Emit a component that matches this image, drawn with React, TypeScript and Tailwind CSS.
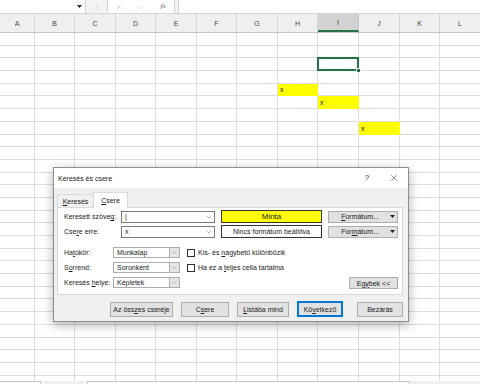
import React from "react";
import { X, Check, ChevronDown } from "lucide-react";

const cols = ["A", "B", "C", "D", "E", "F", "G", "H", "I", "J", "K", "L"];
const gridCols =
  "grid grid-cols-[35px_40px_41px_40px_41px_40px_41px_40px_41px_41px_40px_41px]";

const filled: Record<string, boolean> = { "5-H": true, "6-I": true, "8-J": true };
const rows = Array.from({ length: 28 }, (_, i) => i + 1);

function U({ children }: { children: React.ReactNode }) {
  return <span className="underline underline-offset-[1px]">{children}</span>;
}

function Caret() {
  return (
    <svg width="5" height="3" viewBox="0 0 5 3">
      <path d="M0 0h5L2.5 3z" fill="#222" />
    </svg>
  );
}

function Combo({ value, width }: { value: string; width: string }) {
  return (
    <div className={`${width} h-[12px] flex bg-white border border-[#7a7a7a]`}>
      <div className="flex-1 flex items-center pl-[3px]">{value}</div>
      <div className="w-[11px] flex items-center justify-center">
        <ChevronDown size={8} strokeWidth={1.5} color="#666" />
      </div>
    </div>
  );
}

function Select({ value }: { value: string }) {
  return (
    <div className="w-[67px] h-[11px] flex bg-white border border-[#adadad]">
      <div className="flex-1 flex items-center pl-[3px]">{value}</div>
      <div className="w-[10px] flex items-center justify-center bg-[#e5e5e5] border-l border-[#adadad]">
        <ChevronDown size={7} strokeWidth={1.5} color="#666" />
      </div>
    </div>
  );
}

function FormatButton({ children }: { children: React.ReactNode }) {
  return (
    <div className="ml-auto w-[70px] h-[12px] flex items-center bg-[#e1e1e1] border border-[#adadad]">
      <div className="flex-1 text-center pl-[4px]">{children}</div>
      <div className="w-[10px] flex items-center justify-center">
        <Caret />
      </div>
    </div>
  );
}

function Checkbox({ children }: { children: React.ReactNode }) {
  return (
    <div className="flex items-center h-[11px] gap-[3px]">
      <div className="w-[8px] h-[8px] bg-white border border-[#333]" />
      <span>{children}</span>
    </div>
  );
}

function Btn({ w, focus, children }: { w: string; focus?: boolean; children: React.ReactNode }) {
  return (
    <div
      className={
        focus
          ? `${w} h-[16px] flex items-center justify-center bg-[#e1e1e1] border border-[#0078d7] shadow-[inset_0_0_0_1px_#0078d7]`
          : `${w} h-[15px] flex items-center justify-center bg-[#e1e1e1] border border-[#adadad]`
      }
    >
      {children}
    </div>
  );
}

function Dialog() {
  return (
    <div className="absolute left-[53px] top-[167px] z-20 w-[356px] h-[155px] flex flex-col bg-[#f0f0f0] border border-[#8e8e8e] shadow-[0_3px_10px_rgba(0,0,0,0.3)] text-[#1a1a1a]">
      <div className="h-[20px] flex items-center bg-white pl-[4px] pr-[4px]">
        <span className="flex-1">Keresés és csere</span>
        <div className="w-[20px] flex justify-center text-[8px]">?</div>
        <div className="w-[20px] ml-[7px] flex justify-center">
          <X size={10} strokeWidth={1.2} color="#222" />
        </div>
      </div>

      <div className="flex-1 flex flex-col pl-[3px] pr-[5px] pt-[4px]">
        <div className="flex items-end h-[15px]">
          <div className="w-[36px] h-[13px] flex items-center justify-center border-t border-l border-[#d9d9d9]">
            <U>K</U>eresés
          </div>
          <div className="relative z-10 w-[35px] h-[16px] -mb-[1px] flex items-center justify-center bg-white border-t border-x border-[#d9d9d9]">
            <U>C</U>sere
          </div>
        </div>

        <div className="h-[88px] flex flex-col bg-white border border-[#d9d9d9] pl-[6px] pr-[4px] pt-[2px]">
          <div className="flex items-center h-[13px]">
            <div className="w-[57px]">
              Keresett szöve<U>g</U>:
            </div>
            <Combo value="|" width="w-[94px]" />
            <div className="ml-[6px] w-[101px] h-[13px] flex items-center justify-center bg-[#ffff00] border border-[#333] text-[8px]">
              Minta
            </div>
            <FormatButton>
              <U>F</U>ormátum...
            </FormatButton>
          </div>
          <div className="flex items-center h-[13px] mt-[2px]">
            <div className="w-[57px]">
              Cse<U>r</U>e erre:
            </div>
            <Combo value="x" width="w-[94px]" />
            <div className="ml-[6px] w-[101px] h-[13px] flex items-center justify-center bg-white border border-[#333]">
              Nincs formátum beállítva
            </div>
            <FormatButton>
              For<U>m</U>átum...
            </FormatButton>
          </div>

          <div className="flex mt-[9px]">
            <div className="flex flex-col gap-[4px]">
              <div className="flex items-center">
                <div className="w-[49px]">
                  Ha<U>t</U>ókör:
                </div>
                <Select value="Munkalap" />
              </div>
              <div className="flex items-center">
                <div className="w-[49px]">
                  S<U>o</U>rrend:
                </div>
                <Select value="Soronként" />
              </div>
              <div className="flex items-center">
                <div className="w-[49px]">
                  Keresés <U>h</U>elye:
                </div>
                <Select value="Képletek" />
              </div>
            </div>
            <div className="ml-[7px] flex flex-col gap-[4px]">
              <Checkbox>
                Kis- és <U>n</U>agybetű különbözik
              </Checkbox>
              <Checkbox>
                Ha ez a <U>t</U>eljes cella tartalma
              </Checkbox>
            </div>
            <div className="ml-auto self-end w-[49px] h-[12px] -mb-[1px] flex items-center justify-center bg-[#e1e1e1] border border-[#adadad]">
              Eg<U>y</U>bek &lt;&lt;
            </div>
          </div>
        </div>

        <div className="flex items-center justify-end mt-[6px] pr-[0px]">
          <Btn w="w-[63px]">
            Az öss<U>z</U>es cseréje
          </Btn>
          <div className="w-[8px]" />
          <Btn w="w-[48px]">
            C<U>s</U>ere
          </Btn>
          <div className="w-[8px]" />
          <Btn w="w-[52px]">
            <U>L</U>istába mind
          </Btn>
          <div className="w-[8px]" />
          <Btn w="w-[46px]" focus>
            Kö<U>v</U>etkező
          </Btn>
          <div className="w-[14px]" />
          <Btn w="w-[46px]">Bezárás</Btn>
        </div>
      </div>
    </div>
  );
}

export default function App() {
  return (
    <div className="relative w-[480px] h-[384px] overflow-hidden flex flex-col bg-white font-['Liberation_Sans',Arial,sans-serif] text-[7px] leading-none text-[#222]">
      <div className="h-[14px] flex bg-[#f3f3f3] border-b border-[#d4d4d4]">
        <div className="w-[86px] flex items-center justify-end pr-[3px] bg-white border-r border-[#d4d4d4]">
          <Caret />
        </div>
        <div className="w-[21px] flex items-center justify-center text-[#b5b5b5] text-[8px]">⋮</div>
        <div className="w-[68px] flex items-center bg-white border-x border-[#d4d4d4]">
          <div className="w-[22px] flex justify-center">
            <X size={8} strokeWidth={1.3} color="#b5b5b5" />
          </div>
          <div className="w-[22px] flex justify-center">
            <Check size={8} strokeWidth={1.3} color="#b5b5b5" />
          </div>
          <div className="w-[22px] flex justify-center italic font-['Liberation_Serif',serif] text-[7px] text-[#555]">
            fx
          </div>
        </div>
        <div className="w-[3px]" />
        <div className="flex-1 bg-white border-l border-[#d4d4d4]" />
      </div>

      <div className={`${gridCols} h-[19px] bg-[#efefef] border-b border-[#c6c6c6]`}>
        {cols.map((c) => (
          <div
            key={c}
            className={
              c === "I"
                ? "flex items-center justify-center bg-[#d2d2d2] border-r border-[#c6c6c6] border-b-2 border-b-[#217346] text-[#333]"
                : "flex items-center justify-center border-r border-[#d6d6d6] text-[#444]"
            }
          >
            {c}
          </div>
        ))}
      </div>

      <div className="flex-1 overflow-hidden">
        {rows.map((r) => (
          <div key={r} className={`${gridCols} h-[12.7px]`}>
            {cols.map((c) => {
              const key = `${r}-${c}`;
              const isFilled = filled[key];
              return (
                <div
                  key={c}
                  className={
                    isFilled
                      ? "relative flex items-end pl-[2px] pb-[2px] bg-[#ffff00] border-r border-b border-[#ffff00] text-[#111]"
                      : "relative border-r border-b border-[#dcdcdc]"
                  }
                >
                  {isFilled ? "x" : null}
                  {key === "3-I" && (
                    <div className="absolute left-[-1px] top-[-1px] z-10 w-[42px] h-[14px] border-2 border-[#217346]">
                      <div className="absolute right-[-4px] bottom-[-4px] w-[5px] h-[5px] bg-[#217346] border border-white" />
                    </div>
                  )}
                </div>
              );
            })}
          </div>
        ))}
      </div>

      <div className="h-[3px] flex bg-[#f0f0f0]">
        <div className="w-[41px] bg-white border-t border-r border-[#c6c6c6]" />
        <div className="w-[46px]" />
        <div className="w-[323px] bg-white border-t border-x border-[#c6c6c6]" />
      </div>

      <Dialog />
    </div>
  );
}
